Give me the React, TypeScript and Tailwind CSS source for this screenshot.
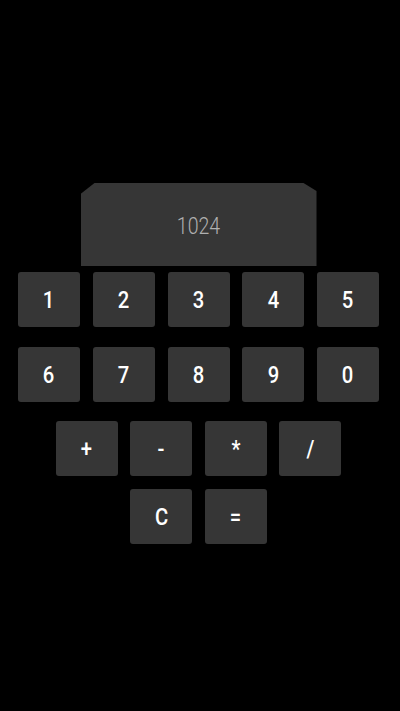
const rows = [
  ["1", "2", "3", "4", "5"],
  ["6", "7", "8", "9", "0"],
];

function Key({ label }: { label: string }) {
  return (
    <button className="flex h-[55px] w-[62px] items-center justify-center rounded-[3px] bg-[#363636] pt-[4px] text-[23px] font-medium text-white">
      <span className="inline-block scale-x-[0.88]">{label}</span>
    </button>
  );
}

export default function App() {
  return (
    <div
      className="flex h-[711px] w-[400px] flex-col items-center bg-black pr-[3px] pt-[183px]"
      style={{ fontFamily: "Roboto, 'Liberation Sans', sans-serif" }}
    >
      <div className="mb-[6px] flex h-[83px] w-[236px] items-center justify-center bg-[#363636] pt-[5px] [clip-path:polygon(14px_0,223px_0,236px_8px,236px_100%,0_100%,0_11px)]">
        <span className="inline-block scale-x-[0.85] text-[23px] font-light text-[#b0b0b0]">1024</span>
      </div>
      <div className="flex flex-col gap-[19.5px]">
        {rows.map((row, i) => (
          <div key={i} className="flex gap-[12.75px]">
            {row.map((k) => (
              <Key key={k} label={k} />
            ))}
          </div>
        ))}
      </div>
      <div className="mt-[19px] flex gap-[12.5px]">
        {["+", "-", "*", "/"].map((k) => (
          <Key key={k} label={k} />
        ))}
      </div>
      <div className="mt-[13px] flex gap-[12.5px]">
        {["C", "="].map((k) => (
          <Key key={k} label={k} />
        ))}
      </div>
    </div>
  );
}
